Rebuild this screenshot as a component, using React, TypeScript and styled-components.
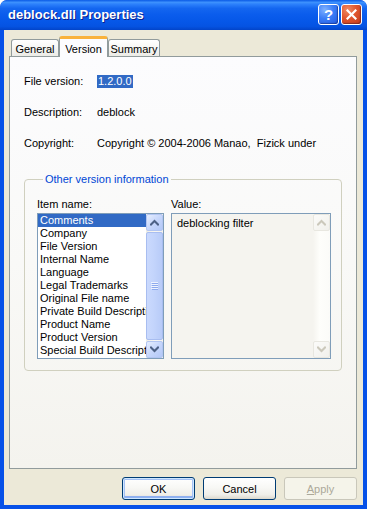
import React from 'react';
import styled, { createGlobalStyle } from 'styled-components';

const Global = createGlobalStyle`
  html, body { margin: 0; padding: 0; background: #ffffff; }
  body { font-family: "Liberation Sans", Arial, sans-serif; font-size: 11px; color: #000; }
  * { box-sizing: border-box; }
`;

const Window = styled.div`
  width: 367px;
  height: 509px;
  display: flex;
  flex-direction: column;
  background: #0a4fe2;
  border-radius: 7px 7px 0 0;
  overflow: hidden;
`;

const TitleBar = styled.div`
  height: 30px;
  flex: none;
  display: flex;
  align-items: center;
  padding: 0 5px 2px 8px;
  background: linear-gradient(180deg, #0a5ae6 0%, #3d91fd 8%, #2c80fb 14%, #1466f0 28%, #0a5cec 50%, #0657e8 72%, #0553e2 88%, #0244c9 100%);
  border-radius: 7px 7px 0 0;
`;

const Title = styled.div`
  flex: 1;
  color: #ffffff;
  font-family: "Liberation Sans", Arial, sans-serif;
  font-weight: bold;
  font-size: 13px;
  text-shadow: 1px 1px 0 #0b1f8c;
  white-space: nowrap;
`;

const CaptionButton = styled.div<{ $kind: 'help' | 'close' }>`
  width: 21px;
  height: 21px;
  margin-left: 2px;
  border: 1px solid #ffffff;
  border-radius: 3px;
  display: flex;
  align-items: center;
  justify-content: center;
  color: #ffffff;
  font-weight: bold;
  font-size: 15px;
  font-family: "Liberation Sans", Arial, sans-serif;
  background: ${(p) =>
    p.$kind === 'help'
      ? 'radial-gradient(circle at 30% 25%, #7fb1ff 0%, #3c7ef7 45%, #2158e0 100%)'
      : 'radial-gradient(circle at 30% 25%, #f08a63 0%, #e0562e 45%, #c2391a 100%)'};
  box-shadow: inset -1px -1px 1px rgba(0, 0, 40, 0.35);
`;

const Body = styled.div`
  flex: 1;
  display: flex;
  flex-direction: column;
  background: #ece9d8;
  border-style: solid;
  border-color: #0651e8;
  border-width: 0 4px 4px 4px;
  padding: 6px 6px 0 5px;
`;

const TabStrip = styled.div`
  height: 21px;
  margin-bottom: -1px;
  display: flex;
  align-items: flex-end;
  padding-left: 2px;
  position: relative;
  z-index: 1;
`;

const Tab = styled.div<{ $active?: boolean; $w: number }>`
  width: ${(p) => p.$w}px;
  height: ${(p) => (p.$active ? 21 : 17)}px;
  margin-bottom: ${(p) => (p.$active ? 0 : 1)}px;
  border: 1px solid #919b9c;
  border-bottom: none;
  border-radius: 3px 3px 0 0;
  display: flex;
  align-items: ${(p) => (p.$active ? 'flex-start' : 'center')};
  justify-content: center;
  padding-top: ${(p) => (p.$active ? 4 : 1)}px;
  background: ${(p) =>
    p.$active ? '#fcfcfe' : 'linear-gradient(180deg, #ffffff 0%, #f8f8f6 40%, #ecebe6 100%)'};
  border-top: ${(p) => (p.$active ? '3px solid #f9b23c' : '1px solid #919b9c')};
  white-space: nowrap;
`;

const Panel = styled.div`
  height: 413px;
  border: 1px solid #919b9c;
  background: linear-gradient(180deg, #fcfcfe 0%, #f9f9f7 50%, #f4f3ee 100%);
  padding: 18px 14px 0 14px;
  display: flex;
  flex-direction: column;
`;

const FieldList = styled.div`
  display: flex;
  flex-direction: column;
  gap: 18px;
`;

const FieldRow = styled.div`
  display: flex;
  height: 13px;
  line-height: 13px;
  white-space: nowrap;
`;

const FieldLabel = styled.div`
  width: 73px;
  flex: none;
`;

const Highlight = styled.span`
  background: #316ac5;
  color: #ffffff;
  padding: 0 1px;
`;

const Group = styled.fieldset`
  margin: 23px 0 0 0;
  padding: 0 0 11px 12px;
  border: 1px solid #d0d0bf;
  border-radius: 4px;
  min-inline-size: 0;
`;

const Legend = styled.legend`
  color: #0046d5;
  padding: 0 2px;
  margin-left: 6px;
  line-height: 13px;
`;

const Columns = styled.div`
  display: grid;
  grid-template-columns: 127px 160px;
  column-gap: 7px;
  padding-top: 12px;
`;

const Column = styled.div`
  display: flex;
  flex-direction: column;
`;

const ColLabel = styled.div`
  line-height: 13px;
  margin-bottom: 2px;
`;

const ListBox = styled.div`
  height: 146px;
  border: 1px solid #7f9db9;
  background: #ffffff;
  display: flex;
`;

const Items = styled.div`
  flex: 1;
  min-width: 0;
  overflow: hidden;
`;

const Item = styled.div<{ $selected?: boolean }>`
  height: 13px;
  line-height: 13px;
  padding-left: 2px;
  white-space: nowrap;
  overflow: hidden;
  background: ${(p) => (p.$selected ? '#316ac5' : 'transparent')};
  color: ${(p) => (p.$selected ? '#ffffff' : '#000000')};
`;

const ScrollBar = styled.div<{ $disabled?: boolean }>`
  width: 17px;
  flex: none;
  display: flex;
  flex-direction: column;
  background: ${(p) =>
    p.$disabled
      ? 'linear-gradient(90deg, #f5f4ef 0%, #fefefb 40%, #fbfbf8 100%)'
      : 'linear-gradient(90deg, #eeede5 0%, #f7f6f2 50%, #f3f1ec 100%)'};
`;

const ScrollButton = styled.div<{ $disabled?: boolean }>`
  height: 17px;
  flex: none;
  border-radius: 2px;
  border: 1px solid ${(p) => (p.$disabled ? '#e8e7e0' : '#b2c5f2')};
  background: ${(p) =>
    p.$disabled
      ? 'linear-gradient(135deg, #fbfbf9 0%, #f1f0eb 100%)'
      : 'linear-gradient(135deg, #e6eefe 0%, #c6d6fb 50%, #b3c8f7 100%)'};
  display: flex;
  align-items: center;
  justify-content: center;
`;

const Track = styled.div`
  flex: 1;
  display: flex;
  flex-direction: column;
  padding: 1px 0;
`;

const Thumb = styled.div`
  flex: 1;
  border-radius: 2px;
  border: 1px solid #a8bdf0;
  background: linear-gradient(90deg, #cad9fd 0%, #c4d5fc 40%, #b8cbf8 100%);
  display: flex;
  align-items: center;
  justify-content: center;
`;

const ValueBox = styled.div`
  height: 146px;
  border: 1px solid #7f9db9;
  background: #f5f4ef;
  display: flex;
`;

const ValueText = styled.div`
  flex: 1;
  padding: 3px 0 0 5px;
  line-height: 13px;
`;

const ButtonRow = styled.div`
  display: flex;
  justify-content: flex-end;
  gap: 8px;
  margin-top: 8px;
`;

const Button = styled.div<{ $default?: boolean; $disabled?: boolean }>`
  width: 73px;
  height: 23px;
  border-radius: 3px;
  border: 1px solid ${(p) => (p.$disabled ? '#c9c7ba' : '#003c74')};
  display: flex;
  align-items: center;
  justify-content: center;
  color: ${(p) => (p.$disabled ? '#aca899' : '#000000')};
  background: ${(p) =>
    p.$disabled
      ? '#f5f4ea'
      : 'linear-gradient(180deg, #ffffff 0%, #f8f8f5 45%, #efeee9 80%, #dcd8cc 100%)'};
  box-shadow: ${(p) =>
    p.$default ? 'inset 0 0 0 1px #cee7ff, inset 0 -2px 0 1px #8fb0f0, inset 0 0 0 2px #a6c2f5' : 'none'};
  u { text-decoration: underline; }
`;

const Chevron = ({ up, color }: { up: boolean; color: string }) => (
  <svg width="9" height="7" viewBox="0 0 9 7">
    <path
      d={up ? 'M1 5.5 L4.5 2 L8 5.5' : 'M1 1.5 L4.5 5 L8 1.5'}
      fill="none"
      stroke={color}
      strokeWidth="2"
      strokeLinecap="square"
    />
  </svg>
);

const Grip = () => (
  <svg width="7" height="8" viewBox="0 0 7 8">
    {[0, 2, 4, 6].map((y) => (
      <g key={y}>
        <rect x="0" y={y} width="7" height="1" fill="#eef3fe" />
        <rect x="1" y={y + 1} width="7" height="1" fill="#8daaee" />
      </g>
    ))}
  </svg>
);

const items = [
  'Comments',
  'Company',
  'File Version',
  'Internal Name',
  'Language',
  'Legal Trademarks',
  'Original File name',
  'Private Build Description',
  'Product Name',
  'Product Version',
  'Special Build Description',
];

export default function App() {
  return (
    <>
      <Global />
      <Window>
        <TitleBar>
          <Title>deblock.dll Properties</Title>
          <CaptionButton $kind="help">?</CaptionButton>
          <CaptionButton $kind="close">
            <svg width="11" height="11" viewBox="0 0 11 11">
              <path d="M1.5 1.5 L9.5 9.5 M9.5 1.5 L1.5 9.5" stroke="#ffffff" strokeWidth="2.2" strokeLinecap="square" />
            </svg>
          </CaptionButton>
        </TitleBar>
        <Body>
          <TabStrip>
            <Tab $w={48}>General</Tab>
            <Tab $w={49} $active>
              Version
            </Tab>
            <Tab $w={52}>Summary</Tab>
          </TabStrip>
          <Panel>
            <FieldList>
              <FieldRow>
                <FieldLabel>File version:</FieldLabel>
                <Highlight>1.2.0.0</Highlight>
              </FieldRow>
              <FieldRow>
                <FieldLabel>Description:</FieldLabel>
                <span>deblock</span>
              </FieldRow>
              <FieldRow>
                <FieldLabel>Copyright:</FieldLabel>
                <span>Copyright © 2004-2006 Manao,&nbsp; Fizick under</span>
              </FieldRow>
            </FieldList>
            <Group>
              <Legend>Other version information</Legend>
              <Columns>
                <Column>
                  <ColLabel>Item name:</ColLabel>
                  <ListBox>
                    <Items>
                      {items.map((it, i) => (
                        <Item key={it} $selected={i === 0}>
                          {it}
                        </Item>
                      ))}
                    </Items>
                    <ScrollBar>
                      <ScrollButton>
                        <Chevron up color="#4d6185" />
                      </ScrollButton>
                      <Track>
                        <Thumb>
                          <Grip />
                        </Thumb>
                      </Track>
                      <ScrollButton>
                        <Chevron up={false} color="#4d6185" />
                      </ScrollButton>
                    </ScrollBar>
                  </ListBox>
                </Column>
                <Column>
                  <ColLabel>Value:</ColLabel>
                  <ValueBox>
                    <ValueText>deblocking filter</ValueText>
                    <ScrollBar $disabled>
                      <ScrollButton $disabled>
                        <Chevron up color="#cbc8bb" />
                      </ScrollButton>
                      <Track />
                      <ScrollButton $disabled>
                        <Chevron up={false} color="#cbc8bb" />
                      </ScrollButton>
                    </ScrollBar>
                  </ValueBox>
                </Column>
              </Columns>
            </Group>
          </Panel>
          <ButtonRow>
            <Button $default>OK</Button>
            <Button>Cancel</Button>
            <Button $disabled>
              <span>
                <u>A</u>pply
              </span>
            </Button>
          </ButtonRow>
        </Body>
      </Window>
    </>
  );
}
